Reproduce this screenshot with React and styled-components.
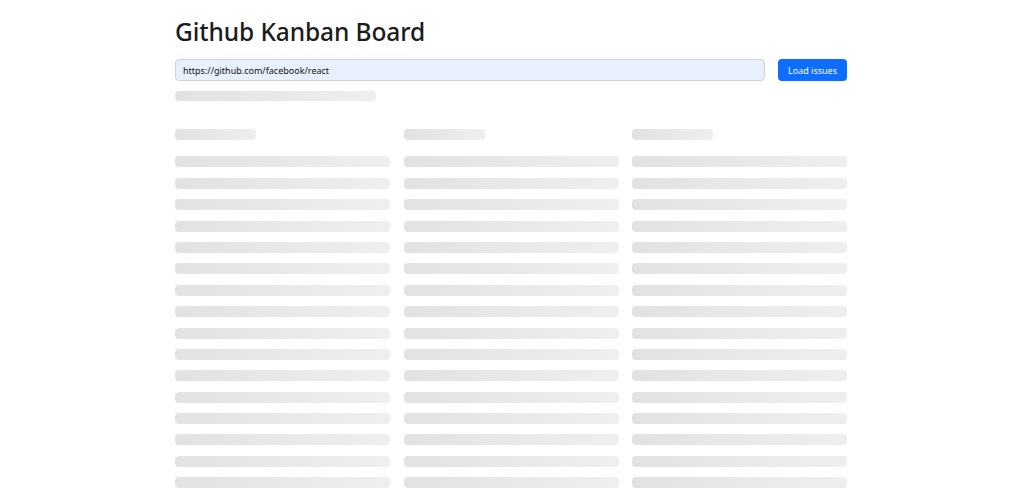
import React from 'react';
import styled, { createGlobalStyle } from 'styled-components';

const GlobalStyle = createGlobalStyle`
  body {
    margin: 0;
    background: #fff;
    font-family: "Noto Sans", "Open Sans", sans-serif;
    color: #212529;
  }
`;

const Page = styled.div`
  width: 672px;
  margin: 0 auto;
  padding: 11px 0 0 3px;
`;

const Title = styled.h1`
  margin: 3px 0 9px;
  font-size: 24.5px;
  font-weight: 500;
  line-height: 36px;
  letter-spacing: -0.1px;
  color: #1c1c1c;
`;

const Toolbar = styled.div`
  display: flex;
  gap: 13px;
  align-items: stretch;
`;

const UrlInput = styled.input`
  flex: 1;
  height: 22px;
  box-sizing: border-box;
  padding: 0 7px;
  border: 1px solid #ced4da;
  border-radius: 4px;
  background: #e8f0fe;
  font-family: inherit;
  font-size: 9px;
  color: #111;
  outline: none;
`;

const Button = styled.button`
  width: 69px;
  height: 22px;
  border: none;
  border-radius: 4px;
  background: #0d6efd;
  color: #fff;
  font-family: inherit;
  font-size: 9px;
  padding: 0;
`;

const Skeleton = styled.div`
  width: ${p => p.w || '100%'};
  height: ${p => p.h || 11}px;
  border-radius: 4px;
  background: linear-gradient(90deg, #e2e2e2 0%, #efefef 100%);
`;

const Status = styled.div`
  margin-top: 10px;
`;

const Board = styled.div`
  display: grid;
  grid-template-columns: repeat(3, 1fr);
  column-gap: 13.5px;
  margin-top: 28px;
`;

const Column = styled.div`
  display: flex;
  flex-direction: column;
  gap: 10.4px;
`;

const ColumnHead = styled.div`
  margin-bottom: 6px;
`;

const rows = Array.from({ length: 16 });

export default function App() {
  return (
    <>
      <GlobalStyle />
      <Page>
        <Title>Github Kanban Board</Title>
        <Toolbar>
          <UrlInput defaultValue="https://github.com/facebook/react" />
          <Button>Load issues</Button>
        </Toolbar>
        <Status>
          <Skeleton w="201px" h={10} />
        </Status>
        <Board>
          {[0, 1, 2].map(c => (
            <Column key={c}>
              <ColumnHead>
                <Skeleton w="81px" h={11} />
              </ColumnHead>
              {rows.map((_, i) => (
                <Skeleton key={i} h={11} />
              ))}
            </Column>
          ))}
        </Board>
      </Page>
    </>
  );
}
